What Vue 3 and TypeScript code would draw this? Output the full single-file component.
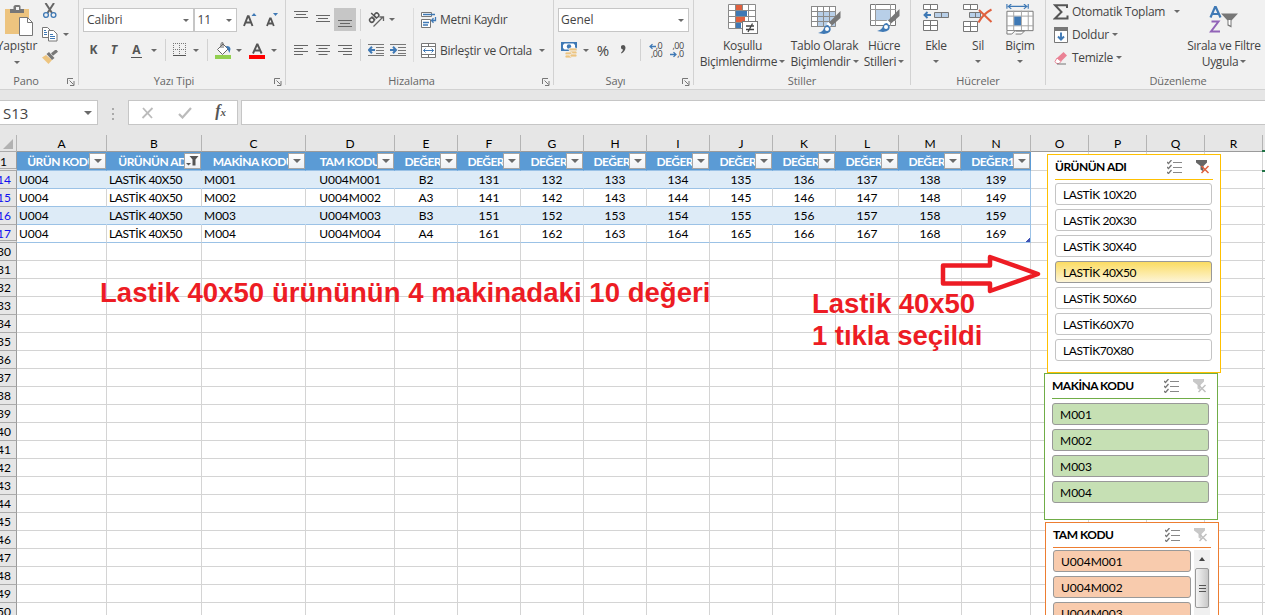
<script setup lang="ts">
interface Column {
  letter: string
  title?: string
  filtered?: boolean
  textual?: boolean
}
interface SheetRow {
  num: number
  cells?: string[]
  band?: boolean
}
interface Slicer {
  id: string
  title: string
  items: string[]
  selected?: string
  active?: boolean
  scroll?: boolean
}

const columns: Column[] = [
  { letter: 'A', title: 'ÜRÜN KODU', textual: true },
  { letter: 'B', title: 'ÜRÜNÜN ADI', filtered: true, textual: true },
  { letter: 'C', title: 'MAKİNA KODU', textual: true },
  { letter: 'D', title: 'TAM KODU' },
  ...['E', 'F', 'G', 'H', 'I', 'J', 'K', 'L', 'M', 'N'].map((letter, i) => ({
    letter,
    title: 'DEĞER' + (i + 1),
  })),
  ...['O', 'P', 'Q', 'R', ''].map((letter) => ({ letter })),
]

const seats = ['B2', 'A3', 'B3', 'A4']
const dataRows: SheetRow[] = seats.map((seat, i) => ({
  num: 14 + i,
  band: i % 2 === 0,
  cells: [
    'U004',
    'LASTİK 40X50',
    'M00' + (i + 1),
    'U004M00' + (i + 1),
    seat,
    ...Array.from({ length: 9 }, (_, k) => String(131 + i * 10 + k)),
  ],
}))
const emptyRows: SheetRow[] = Array.from({ length: 21 }, (_, i) => ({ num: 30 + i }))
const rows: SheetRow[] = [...dataRows, ...emptyRows]

const slicers: Slicer[] = [
  {
    id: 'gold',
    title: 'ÜRÜNÜN ADI',
    items: ['LASTİK 10X20', 'LASTİK 20X30', 'LASTİK 30X40', 'LASTİK 40X50', 'LASTİK 50X60', 'LASTİK60X70', 'LASTİK70X80'],
    selected: 'LASTİK 40X50',
    active: true,
  },
  { id: 'green', title: 'MAKİNA KODU', items: ['M001', 'M002', 'M003', 'M004'] },
  { id: 'orange', title: 'TAM KODU', items: ['U004M001', 'U004M002', 'U004M003', 'U004M004'], scroll: true },
]
</script>

<template>
  <div class="app">
    <header class="ribbon">
      <section class="group pano">
        <div class="body">
          <div class="paste">
            <svg width="30" height="32" viewBox="0 0 30 32">
              <rect x="0" y="4" width="24" height="25" fill="#edc47f" />
              <path d="M5 4h3.500V1.500Q9 0 10.500 0h3.500Q15.500 0 15.500 1.500V4H19v4H5z" fill="#777" />
              <rect x="11" y="2" width="3" height="3" fill="#f1f1f1" />
              <path d="M14.500 12.500h8l5 5v13h-13z" fill="#fff" stroke="#777" />
              <path d="M22.500 12.500v5h5" fill="none" stroke="#777" />
            </svg>
            <span class="tx">Yapıştır</span>
            <i class="caret"></i>
          </div>
          <div class="clip">
            <svg width="16" height="16" viewBox="0 0 16 16">
              <path d="M3.500 0l6.500 10M12 0L5.500 10" stroke="#666" stroke-width="2" fill="none" />
              <circle cx="4" cy="12" r="2.400" fill="none" stroke="#3f79b5" stroke-width="1.300" />
              <circle cx="11.500" cy="12" r="2.400" fill="none" stroke="#3f79b5" stroke-width="1.300" />
            </svg>
            <div class="copy">
              <svg width="16" height="15" viewBox="0 0 16 15">
                <path d="M.5.5h5l3 3v7h-8z" fill="#fff" stroke="#777" />
                <path d="M6.500 3.500h5l3.500 3.500v7H6.500z" fill="#fff" stroke="#777" />
                <path d="M2 3.500h2M2 5.500h3M2 7.500h3M8 7.500h3M8 9.500h5M8 11.500h5" stroke="#3f79b5" />
              </svg>
              <i class="caret"></i>
            </div>
            <svg width="17" height="14" viewBox="0 0 17 14">
              <path d="M0 7.500l4-2.500 6 5-3.500 4z" fill="#edc47f" />
              <path d="M4.500 4L7 2l5.500 6-2.500 2z" fill="#777" />
              <path d="M10 4.500L15 .5" stroke="#777" stroke-width="3.200" />
            </svg>
          </div>
        </div>
        <footer><span>Pano</span><svg class="launch" viewBox="0 0 8 8"><path d="M.5 6V.5H6M2.500 2.500l4 4M7 3v4.500H3" /></svg></footer>
      </section>

      <section class="group font">
        <div class="r1">
          <div class="box name"><span class="tx">Calibri</span><i class="caret"></i></div>
          <div class="box size"><span class="tx">11</span><i class="caret"></i></div>
          <svg width="16" height="16" viewBox="0 0 16 16">
            <path d="M1 14L4.800 4.300h.9L9.500 14M2.500 10.500h5.500" fill="none" stroke="#555" stroke-width="1.900" />
            <path d="M8.500 4L11 1l2.500 3z" fill="#3f79b5" />
          </svg>
          <svg width="14" height="16" viewBox="0 0 14 16">
            <path d="M1 14L4 6.300h.8L7.800 14M2.200 11.500h4.300" fill="none" stroke="#555" stroke-width="1.800" />
            <path d="M7 1h5L9.500 4z" fill="#3f79b5" />
          </svg>
        </div>
        <div class="r2">
          <b class="fmt">K</b>
          <b class="fmt it">T</b>
          <b class="fmt un">A</b>
          <i class="caret"></i>
          <i class="sep"></i>
          <svg width="14" height="14" viewBox="0 0 14 14" shape-rendering="crispEdges">
            <path d="M.5 0v12M6.500 0v12M12.500 0v12M0 .5h13M0 6.500h13" stroke="#777" stroke-dasharray="1 1" fill="none" />
            <path d="M0 12.500h13" stroke="#555" />
          </svg>
          <i class="caret"></i>
          <i class="sep"></i>
          <svg width="16" height="17" viewBox="0 0 16 17">
            <path d="M2.500 7.500L8 2l5 5-5.500 5.500z" fill="#fff" stroke="#666" />
            <path d="M6 6V1.500Q6.500.5 8 .8V6" fill="none" stroke="#666" />
            <path d="M11 4q4-.5 4.500 3L14.500 11 12 6z" fill="#3f79b5" />
            <rect y="13" width="16" height="4" fill="#92d050" />
          </svg>
          <i class="caret"></i>
          <svg width="16" height="17" viewBox="0 0 16 17">
            <path d="M4 11.500L8 2.500h.6l4 9M5.500 8.500h6" fill="none" stroke="#555" stroke-width="1.900" />
            <rect y="13" width="16" height="4" fill="#f00" />
          </svg>
          <i class="caret"></i>
        </div>
        <footer><span>Yazı Tipi</span><svg class="launch" viewBox="0 0 8 8"><path d="M.5 6V.5H6M2.500 2.500l4 4M7 3v4.500H3" /></svg></footer>
      </section>

      <section class="group align">
        <div class="alignbody">
          <div class="aleft">
            <div class="r1">
              <svg class="ln" viewBox="0 0 14 23"><path d="M0 3.500h14M2 6.500h10M0 9.500h14" /></svg>
              <svg class="ln" viewBox="0 0 14 23"><path d="M0 7.500h14M2 10.500h10M0 13.500h14" /></svg>
              <span class="pressed"><svg class="ln" viewBox="0 0 14 23"><path d="M0 12.500h14M2 15.500h10M0 18.500h14" /></svg></span>
              <i class="sep"></i>
              <svg width="17" height="17" viewBox="0 0 17 17">
                <g transform="rotate(-45 7 8)">
                  <circle cx="4" cy="6.500" r="2.200" fill="none" stroke="#555" stroke-width="1.500" />
                  <path d="M6.300 3.800v5.200M8.600 1v8" stroke="#555" stroke-width="1.500" />
                  <circle cx="10.800" cy="6.500" r="2.200" fill="none" stroke="#555" stroke-width="1.500" />
                </g>
                <path d="M5.500 15.500L15 6M11.500 6H15.500v4" fill="none" stroke="#666" stroke-width="1.300" />
              </svg>
              <i class="caret"></i>
            </div>
            <div class="r2">
              <svg class="ln" viewBox="0 0 14 23"><path d="M0 6.500h14M0 9.500h9M0 12.500h14M0 15.500h9" /></svg>
              <svg class="ln" viewBox="0 0 14 23"><path d="M0 6.500h14M2.500 9.500h9M0 12.500h14M2.500 15.500h9" /></svg>
              <svg class="ln" viewBox="0 0 14 23"><path d="M0 6.500h14M5 9.500h9M0 12.500h14M5 15.500h9" /></svg>
              <i class="sep"></i>
              <svg width="16" height="14" viewBox="0 0 16 14">
                <path d="M0 1.500h16M8 4.500h8M8 7.500h8M8 10.500h8M0 12.500h16" stroke="#777" />
                <path d="M7 7H2M4 3.800L1 7l3 3.200" stroke="#3f79b5" stroke-width="2" fill="none" />
              </svg>
              <svg width="16" height="14" viewBox="0 0 16 14">
                <path d="M0 1.500h16M8 4.500h8M8 7.500h8M8 10.500h8M0 12.500h16" stroke="#777" />
                <path d="M0 7h5M3 3.800L6 7l-3 3.200" stroke="#3f79b5" stroke-width="2" fill="none" />
              </svg>
            </div>
          </div>
          <div class="aright">
            <div class="cmd">
              <svg width="16" height="16" viewBox="0 0 16 16">
                <path d="M.5.500h10v4H.5zM.5 7.500h9v8h-9z" fill="#fff" stroke="#777" />
                <path d="M2 2.500h12M2 10.500h6M2 13h5M14.500 5v3.500H11M12.500 6.300L10.500 8.500l2 2.200" fill="none" stroke="#3f79b5" stroke-width="1.300" />
              </svg>
              <span class="tx">Metni Kaydır</span>
            </div>
            <div class="cmd">
              <svg width="16" height="16" viewBox="0 0 16 16">
                <path d="M.5.500h14v14H.5zM.5 3.500h14M.5 11.500h14M7.500.5v3M7.500 11.500v3" fill="#fff" stroke="#777" />
                <path d="M2.500 7.500h10M4.500 5.500l-2 2 2 2M10.500 5.500l2 2-2 2" fill="none" stroke="#3f79b5" />
              </svg>
              <span class="tx">Birleştir ve Ortala</span>
              <i class="caret"></i>
            </div>
          </div>
        </div>
        <footer><span>Hizalama</span><svg class="launch" viewBox="0 0 8 8"><path d="M.5 6V.5H6M2.500 2.500l4 4M7 3v4.500H3" /></svg></footer>
      </section>

      <section class="group number">
        <div class="r1"><div class="box"><span class="tx">Genel</span><i class="caret"></i></div></div>
        <div class="r2">
          <svg width="17" height="16" viewBox="0 0 17 16">
            <rect x="0" y="0" width="16" height="9" fill="#3f79b5" />
            <path d="M2 3L3.500 1.500h9L14 3v3L12.500 7.500h-9L2 6z" fill="#fff" />
            <circle cx="8" cy="4.500" r="2.200" fill="#3f79b5" />
            <g fill="#edc47f" stroke="#f1f1f1" stroke-width=".8">
              <rect x="8" y="6" width="8" height="3.200" rx="1.500" /><rect x="8" y="9" width="8" height="3.200" rx="1.500" />
              <rect x="4" y="10" width="7" height="3" rx="1.500" /><rect x="4" y="13" width="7" height="3" rx="1.500" /><rect x="9" y="12" width="7" height="3" rx="1.500" />
            </g>
          </svg>
          <i class="caret"></i>
          <span class="pct">%</span>
          <svg width="7" height="12" viewBox="0 0 7 12"><path d="M1 2.500Q1 1 3.200 1 5.500 1 5.500 3.500 5.500 7 1.500 9.500L1 8.700Q3 7 3 5.500 1 5.500 1 3.500z" fill="#555" /></svg>
          <i class="sep"></i>
          <div class="dec"><span><svg width="7" height="7" viewBox="0 0 8 7"><path d="M8 3.500H2M4 .8L1.200 3.500 4 6.200" fill="none" stroke="#3f79b5" stroke-width="1.500" /></svg>,0</span><span>,00</span></div>
          <div class="dec"><span>,00</span><span><svg width="7" height="7" viewBox="0 0 8 7"><path d="M0 3.500h6M4 .8L6.800 3.500 4 6.200" fill="none" stroke="#3f79b5" stroke-width="1.500" /></svg>,0</span></div>
        </div>
        <footer><span>Sayı</span><svg class="launch" viewBox="0 0 8 8"><path d="M.5 6V.5H6M2.500 2.500l4 4M7 3v4.500H3" /></svg></footer>
      </section>

      <section class="group styles">
        <div class="bigs">
          <div class="big">
            <svg width="30" height="31" viewBox="0 0 30 31">
              <path d="M.5.500h27v24H.5z" fill="#fff" stroke="#8a8a8a" />
              <path d="M0 6.500h28M0 12.500h28M0 18.500h28M7.500 0v25M14.500 0v25M20.500 0v25" stroke="#8a8a8a" />
              <path d="M8 1h6v5H8zM8 13h9v5H8z" fill="#e0603e" /><path d="M8 7h11v5H8zM8 19h5v5H8z" fill="#3f79b5" />
              <rect x="14.500" y="17.500" width="15" height="12" fill="#fff" stroke="#777" />
              <path d="M18 22h8M18 25.500h8M24.500 19.500l-4.500 8.500" stroke="#444" stroke-width="1.300" />
            </svg>
            <span class="tx">Koşullu</span>
            <span class="tx">Biçimlendirme<i class="caret"></i></span>
          </div>
          <div class="big">
            <svg width="30" height="31" viewBox="0 0 30 31">
              <path d="M.5 2.500h24v20H.5z" fill="#fff" stroke="#777" />
              <path d="M7 8h18v15H7z" fill="#b8cfe8" />
              <path d="M0 7.500h25M0 12.500h25M0 17.500h25M6.500 2v21M12.500 2v21M18.500 2v21M.5 2.500h24v20H.5z" fill="none" stroke="#8a8a8a" />
              <path d="M29.500 7v7l-9 8-3-3z" fill="#777" /><path d="M17.500 18l3 3-2 2-3-3z" fill="#fff" />
              <path d="M7 29q5-1 6-5 1-3 4-3l2.500 2.500Q21 29 13 30z" fill="#3f79b5" /><circle cx="16" cy="25" r="2" fill="#fff" />
            </svg>
            <span class="tx">Tablo Olarak</span>
            <span class="tx">Biçimlendir<i class="caret"></i></span>
          </div>
          <div class="big">
            <svg width="30" height="31" viewBox="0 0 30 31">
              <path d="M.5.500h25v21H.5z" fill="#fff" stroke="#777" />
              <path d="M0 5.500h26M0 16.500h26M5.500 0v22M20.500 0v22" stroke="#999" />
              <rect x="6" y="6" width="14" height="10" fill="#b8cfe8" />
              <path d="M29.500 5v7l-9 8-3-3z" fill="#777" /><path d="M17.500 16l3 3-2 2-3-3z" fill="#fff" />
              <path d="M7 27q5-1 6-5 1-3 4-3l2.500 2.500Q21 27 13 28z" fill="#3f79b5" /><circle cx="16" cy="23" r="2" fill="#fff" />
            </svg>
            <span class="tx">Hücre</span>
            <span class="tx">Stilleri<i class="caret"></i></span>
          </div>
        </div>
        <footer><span>Stiller</span></footer>
      </section>

      <section class="group cellsg">
        <div class="bigs">
          <div class="big">
            <svg width="26" height="31" viewBox="0 0 26 31">
              <path d="M.5.500h14v5H.5zM7.500.5v5M.5 16.500h14v10H.5zM.5 21.500h14M7.500 16.500v10" fill="#fff" stroke="#777" />
              <path d="M11.500 8.500h14v5h-14zM18.500 8.500v5" fill="#b8cfe8" stroke="#777" />
              <path d="M8 11H2M4.500 8L1.500 11l3 3" fill="none" stroke="#3f79b5" stroke-width="1.900" />
            </svg>
            <span class="tx">Ekle</span><i class="caret"></i>
          </div>
          <div class="big">
            <svg width="30" height="31" viewBox="0 0 30 31">
              <path d="M.5.500h14v5H.5zM7.500.5v5M.5 17.500h14v10H.5zM.5 22.500h14M7.500 17.500v10" fill="#fff" stroke="#777" />
              <path d="M6.500 8.500h11v5h-11zM12.500 8.500v5" fill="#b8cfe8" stroke="#777" />
              <path d="M16 6l12.500 12M28.500 5.500Q20 10 15.500 18.500" fill="none" stroke="#e0603e" stroke-width="2" />
            </svg>
            <span class="tx">Sil</span><i class="caret"></i>
          </div>
          <div class="big">
            <svg width="28" height="32" viewBox="0 0 28 32">
              <path d="M.5 0v5M22.500 0v5M2 2.500h19M5 0L2 2.500 5 5M18 0l3 2.500L18 5" fill="none" stroke="#3f79b5" stroke-width="1.200" />
              <path d="M.5 7.500h27v20H.5z" fill="#fff" stroke="#777" />
              <path d="M0 12.500h28M0 22.500h28M7.500 7v20M15.500 7v20M22.500 7v20" stroke="#a5a5a5" />
              <rect x="8" y="13" width="7" height="9" fill="#3f79b5" />
              <path d="M.5 28v3h5l3-3M9.500 31h6l3-3h-9" fill="#fff" stroke="#777" />
            </svg>
            <span class="tx">Biçim</span><i class="caret"></i>
          </div>
        </div>
        <footer><span>Hücreler</span></footer>
      </section>

      <section class="group edit">
        <div class="editbody">
          <div class="cmds">
            <div class="cmd">
              <svg width="16" height="16" viewBox="0 0 16 16"><path d="M14 4V1.200H2L8.500 8 2 14.500h12.500V11.500" fill="none" stroke="#555" stroke-width="2" /></svg>
              <span class="tx">Otomatik Toplam</span><i class="caret far"></i>
            </div>
            <div class="cmd">
              <svg width="16" height="16" viewBox="0 0 16 16">
                <path d="M1.500.5h13v15h-13z" fill="#fff" stroke="#777" /><path d="M1 0h14v4H1z" fill="#777" />
                <path d="M8 5.500v7M5 9.500l3 3.200 3-3.200" fill="none" stroke="#3f79b5" stroke-width="1.900" />
              </svg>
              <span class="tx">Doldur</span><i class="caret"></i>
            </div>
            <div class="cmd">
              <svg width="16" height="16" viewBox="0 0 16 16">
                <path d="M4 8l6.500-6 3.500 3.500-6 6z" fill="#ea8194" /><path d="M4 8l4 3.500-2 2H3.500L2 11.500z" fill="#fff" stroke="#ea8194" />
                <path d="M4 14h9" stroke="#777" />
              </svg>
              <span class="tx">Temizle</span><i class="caret"></i>
            </div>
          </div>
          <div class="big">
            <svg width="30" height="28" viewBox="0 0 30 28">
              <path d="M1.500 12L6 1.500h.8L11.500 12M3 8.500h7" fill="none" stroke="#3f79b5" stroke-width="2.200" />
              <path d="M2.500 16h7L2 26h9" fill="none" stroke="#9264b8" stroke-width="2" />
              <path d="M12 8h17l-6.500 7v7l-4-2v-5z" fill="#777" /><path d="M19.500 14.500h2v5.500l-2-1z" fill="#fff" />
            </svg>
            <span class="tx">Sırala ve Filtre</span>
            <span class="tx">Uygula<i class="caret"></i></span>
          </div>
        </div>
        <footer><span>Düzenleme</span></footer>
      </section>
    </header>

    <div class="formula">
      <div class="namebox"><span>S13</span><i class="caret"></i></div>
      <div class="dots"><i></i><i></i><i></i></div>
      <div class="fx">
        <svg width="14" height="12" viewBox="0 0 14 12"><path d="M2 1l9 10M11.500 1L1.500 11" stroke="#bbb" stroke-width="1.800" /></svg>
        <svg width="14" height="12" viewBox="0 0 14 12"><path d="M1 7l3.500 3.500L13 1" fill="none" stroke="#bbb" stroke-width="2.200" /></svg>
        <span class="fxl"><i>f</i><i class="sub">x</i></span>
      </div>
      <div class="input"></div>
    </div>

    <main class="sheet">
      <div class="row letters">
        <div class="rh corner"><svg width="10" height="10" viewBox="0 0 10 10"><path d="M10 0v10H0z" fill="#b2b2b2" /></svg></div>
        <div v-for="(c, i) in columns" :key="i" class="cell">{{ c.letter }}</div>
      </div>
      <div class="row titles">
        <div class="rh gap first">1</div>
        <div v-for="(c, i) in columns" :key="i" class="cell" :class="{ head: c.title }">
          <template v-if="c.title">
            <span>{{ c.title }}</span>
            <div class="filter">
              <i v-if="!c.filtered" class="caret"></i>
              <svg v-else width="13" height="12" viewBox="0 0 13 12"><path d="M3.500 1H12.500L9.500 4.500V10.500h-3V4.500z" fill="#555" /><path d="M0 8h5L2.500 10.500z" fill="#555" /></svg>
            </div>
          </template>
        </div>
      </div>
      <div
        v-for="r in rows"
        :key="r.num"
        class="row"
        :class="{ band: r.band, data: r.cells }"
      >
        <div class="rh" :class="{ blue: r.cells, gap: r.num === 17 }">{{ r.num }}</div>
        <div v-for="(c, i) in columns" :key="i" class="cell" :class="{ textual: c.textual, tbl: r.cells && c.title }">
          {{ r.cells?.[i] ?? '' }}
        </div>
      </div>
    </main>

    <i class="handle"></i>
    <i class="sel"></i>

    <p class="note one">Lastik 40x50 ürününün 4 makinadaki 10 değeri</p>
    <p class="note two">Lastik 40x50<br />1 tıkla seçildi</p>
    <svg class="arrow" width="102" height="42" viewBox="0 0 102 42">
      <path d="M3 12.500h47V4L98 21 50 38V30.500H3z" fill="none" stroke="#ed1c24" stroke-width="4.500" stroke-linejoin="round" />
    </svg>

    <aside v-for="s in slicers" :key="s.id" class="slicer" :class="s.id">
      <div class="shead">
        <b>{{ s.title }}</b>
        <svg width="16" height="14" viewBox="0 0 16 14">
          <path d="M6 2.500h9M6 7.500h9M6 12.500h9" stroke="#888" />
          <path d="M0 2l1.500 1.500L4.500 0M0 7l1.500 1.500L4.500 5M0 12l1.500 1.500L4.500 10" fill="none" stroke="#777" stroke-width="1.300" />
        </svg>
        <svg width="15" height="14" viewBox="0 0 15 14" class="clear" :class="{ on: s.active }">
          <path class="fun" d="M1 0h11v2.500L8.500 6v5.500l-3-2V6L1 2.500z" />
          <path class="x" d="M6.500 6l7 7M13.500 6l-7 7" />
        </svg>
      </div>
      <div class="sbody">
        <div class="items">
          <div v-for="t in s.items" :key="t" class="item" :class="{ picked: s.selected === t }">{{ t }}</div>
        </div>
        <div v-if="s.scroll" class="scroll">
          <i class="up"></i>
          <div class="thumb"><i></i><i></i><i></i></div>
        </div>
      </div>
    </aside>
  </div>
</template>

<style>
body {
  overflow: hidden;
}
</style>

<style scoped>
* {
  box-sizing: border-box;
}
.app {
  position: relative;
  width: 1265px;
  height: 615px;
  overflow: hidden;
  background: #fff;
  color: #444;
  font: 12px/16px 'Open Sans', sans-serif;
}
svg {
  display: block;
  flex: none;
}
.tx {
  white-space: nowrap;
  letter-spacing: -0.28px;
}
.caret {
  flex: none;
  display: inline-block;
  width: 0;
  height: 0;
  border: 3px solid transparent;
  border-top-color: #6a6a6a;
  border-bottom: 0;
}
.ribbon {
  display: flex;
  height: 90px;
  overflow: hidden;
  background: #f1f1f1;
  border-bottom: 1px solid #d2d2d2;
}
.group {
  position: relative;
  flex: none;
  display: flex;
  flex-direction: column;
  height: 85px;
  padding-top: 8px;
  border-right: 1px solid #d2d2d2;
}
.pano { width: 79px; }
.font { width: 207px; }
.align { width: 268px; }
.number { width: 140px; }
.styles { width: 217px; }
.cellsg { width: 135px; }
.edit { width: 265px; }
footer {
  display: flex;
  align-items: center;
  justify-content: center;
  height: 14px;
  margin-top: auto;
  margin-bottom: -3px;
  padding-right: 16px;
  color: #666;
  font-size: 11px;
}
footer span { letter-spacing: -0.1px; }
.pano footer { padding-right: 26px; }
.styles footer, .cellsg footer, .edit footer { padding-right: 0; }
.launch {
  position: absolute;
  right: 3px;
  bottom: -1px;
  width: 8px;
  height: 8px;
  fill: none;
  stroke: #777;
}
.r1, .r2 {
  display: grid;
  place-items: center;
  height: 23px;
}
.r2 { margin-top: 7px; height: 24px; }
.sep { width: 1px; height: 22px; background: #d2d2d2; }
.box {
  display: flex;
  align-items: center;
  justify-content: space-between;
  width: 100%;
  height: 24px;
  padding: 0 4px 0 3px;
  border: 1px solid #c6c6c6;
  background: #fff;
}
.box .tx { letter-spacing: 0; }
.pano .body { display: flex; margin-top: -3px; }
.paste { display: flex; flex-direction: column; align-items: center; width: 34px; }
.paste svg { margin-left: 5px; }
.paste .tx { margin-top: 1px; letter-spacing: -0.15px; }
.paste .caret { margin-top: 7px; }
.clip { display: flex; flex-direction: column; margin: -2px 0 0 8px; }
.copy { display: flex; align-items: center; gap: 5px; margin: 8px 0 8px; }
.font .r1 { grid-template-columns: 111px 43px 28px 15px; padding-left: 4px; }
.font .size { margin-left: -1px; }
.font .r2 { grid-template-columns: 19px 22px 23px 11px 12px 18px 14px 8px 24px 8px 28px 6px; justify-content: start; padding-left: 5px; }
.fmt { font-size: 12px; line-height: 14px; color: #555; }
.it { font-style: italic; }
.un { border-bottom: 1px solid #555; padding: 0 1px; }
.alignbody { display: flex; height: 54px; }
.aleft { width: 128px; border-right: 1px solid #dcdcdc; }
.align .r2 { grid-template-columns: 22px 22px 22px 8px 24px 20px; padding-left: 4px; }
.align .r1 { grid-template-columns: 22px 22px 22px 8px 25px 6px; padding-left: 4px; }
.ln { width: 14px; height: 23px; stroke: #666; fill: none; }
.pressed { display: grid; place-items: center; width: 22px; height: 23px; background: #c6c6c6; }
.aright { padding-left: 7px; }
.cmd { display: flex; align-items: center; gap: 3px; height: 23px; }
.aright .cmd + .cmd { margin-top: 8px; }
.aright .caret { margin-left: 4px; }
.number .r1 { padding: 0 4px 0 4px; }
.number .box { padding-left: 2px; }
.number .r2 { grid-template-columns: 19px 13px 22px 19px 15px 15px 28px; justify-content: start; padding-left: 6px; }
.pct { font-size: 15px; }
.dec {
  display: flex;
  flex-direction: column;
  align-items: flex-end;
  font-size: 9px;
  line-height: 8px;
  letter-spacing: -0.4px;
}
.dec span { display: flex; align-items: center; }
.bigs { display: flex; margin-top: -4px; }
.big { display: flex; flex-direction: column; align-items: center; }
.big svg { height: 31px; margin-bottom: 3px; }
.big .caret { margin-left: 2px; vertical-align: 3px; }
.cellsg .caret { margin-top: 6px; margin-left: 0; }
.styles .bigs { padding-left: 5px; }
.styles .big:nth-child(1) { width: 87px; }
.styles .big:nth-child(2) { width: 77px; }
.styles .big:nth-child(3) { width: 42px; }
.styles .big:nth-child(n + 2) svg { margin-left: 2px; }
.cellsg .big { width: 42px; }
.cellsg .bigs { padding-left: 4px; }
.editbody { display: flex; margin-top: -8px; }
.cmds { width: 141px; padding-left: 7px; }
.edit .far { margin-left: 6px; }
.edit .big { margin-top: 4px; width: 74px; }

.formula { display: flex; height: 45px; padding-top: 10px; background: #e6e6e6; }
.namebox, .fx, .input { height: 25px; border: 1px solid #c6c6c6; background: #fff; }
.namebox {
  display: flex;
  align-items: center;
  justify-content: space-between;
  width: 98px;
  padding: 0 5px 0 3px;
  border-left: 0;
  font-size: 15px;
}
.namebox .caret { border-width: 4px 4px 0; }
.dots { display: flex; flex-direction: column; gap: 3px; width: 30px; padding: 8px 0 0 14px; }
.dots i { width: 2px; height: 2px; background: #aaa; }
.fx { display: flex; align-items: center; justify-content: space-between; width: 110px; padding: 0 11px 0 12px; }
.fxl { margin-top: -2px; font: italic bold 16px/16px 'Liberation Serif', serif; color: #555; }
.sub { font-size: 11px; }
.input { flex: 1; margin-left: 3px; border-right: 0; }

.row {
  display: grid;
  grid-template-columns: 17px 90px 95px 104px 89px repeat(9, 63px) 69px repeat(4, 58px) 60px;
  height: 18px;
  color: #000;
  font: 12px/18px Lato, sans-serif;
}
.cell {
  position: relative;
  overflow: hidden;
  border-right: 1px solid #d4d4d4;
  border-bottom: 1px solid #d4d4d4;
  text-align: center;
  white-space: nowrap;
}
.textual.tbl { text-align: left; padding-left: 2px; }
.tbl:nth-child(3) { letter-spacing: -0.4px; }
.rh {
  display: flex;
  justify-content: flex-end;
  padding-right: 5px;
  background: #e6e6e6;
  border-right: 1px solid #9b9b9b;
  border-bottom: 1px solid #ababab;
  overflow: hidden;
}
.rh.blue { color: #1010f0; }
.rh.gap { border-bottom: 3px double #ababab; }
.rh.first { padding-right: 9px; }
.letters { height: 17px; line-height: 18px; background: #e6e6e6; }
.letters .cell { border-right-color: #b4b4b4; border-bottom-color: #9b9b9b; }
.corner { padding: 4px 3px 0 0; border-right-color: #b4b4b4; }
.titles { height: 19px; line-height: 19px; }
.titles .cell.head {
  background: #5b9bd5;
  border-right-color: #5b9bd5;
  border-bottom-color: #9bc2e6;
  color: #fff;
  font-weight: 700;
  letter-spacing: -0.5px;
}
.head span { display: block; margin: 0 -10px; }
.filter {
  position: absolute;
  right: 0;
  top: 1px;
  display: grid;
  place-items: center;
  width: 17px;
  height: 16px;
  border: 1px solid #a5a5a5;
  background: linear-gradient(#fff, #eef0f4);
}
.filter .caret { border-width: 4px 4px 0; }
.data .tbl { border-bottom-color: #9bc2e6; }
.band .tbl { background: #ddebf7; border-right-color: #ddebf7; }
.data .tbl:nth-child(15) { border-right-color: #9bc2e6; }

.handle {
  position: absolute;
  left: 1026px;
  top: 238px;
  width: 4px;
  height: 4px;
  background: linear-gradient(135deg, transparent 45%, #3f51b5 45%);
}
.sel {
  position: absolute;
  left: 1262px;
  top: 150px;
  width: 4px;
  height: 22px;
  border: solid #217346;
  border-width: 2px 0;
}
.note {
  position: absolute;
  margin: 0;
  color: #ed1c24;
  font: bold 27.500px/32px 'Liberation Sans', sans-serif;
  white-space: nowrap;
}
.one { left: 100px; top: 277px; letter-spacing: 0.05px; }
.two { left: 812px; top: 288px; letter-spacing: -0.05px; }
.arrow { position: absolute; left: 940px; top: 253px; }

.slicer {
  position: absolute;
  width: 174px;
  padding: 0 7px;
  border: 1px solid;
  background: #fff;
  color: #000;
  font: 12px/20px Lato, sans-serif;
}
.gold { left: 1047px; top: 154px; height: 219px; border-color: #ffc000; }
.green { left: 1044px; top: 373px; height: 147px; border-color: #70ad47; }
.orange { left: 1045px; top: 522px; height: 160px; border-color: #ed7d31; }
.shead {
  display: flex;
  align-items: center;
  height: 25px;
  border-bottom: 1px solid;
  border-color: inherit;
}
.shead b { flex: 1; letter-spacing: -0.5px; }
.clear { margin: 0 3px 0 12px; fill: #c8c8c8; stroke: none; }
.clear .x { stroke: #c0c0c0; stroke-width: 1.500; }
.clear.on .fun { fill: #666; }
.clear.on .x { stroke: #e0603e; }
.sbody { display: flex; padding-top: 3px; }
.green .sbody { padding-top: 4px; }
.items { flex: none; display: flex; flex-direction: column; gap: 4px; width: 157px; }
.item {
  height: 22px;
  padding-left: 7px;
  border: 1px solid #c4c4c4;
  border-radius: 3px;
  line-height: 22px;
}
.gold .item { letter-spacing: -0.4px; }
.picked { border-color: #999; background: linear-gradient(#fbdc62, #fdf5d8); }
.green .item { border-color: #999; background: #c6e0b4; }
.orange .item { border-color: #999; background: #f8cbad; }
.orange .items { width: 138px; }
.orange .sbody { padding-top: 2px; }
.scroll { width: 16px; height: 120px; margin-left: 3px; background: #f0f0f0; }
.up { display: block; width: 0; margin: 7px auto 0; border: 3px solid transparent; border-bottom: 4px solid #444; border-top: 0; }
.thumb {
  display: flex;
  flex-direction: column;
  align-items: center;
  justify-content: center;
  gap: 2px;
  height: 40px;
  margin: 7px 1px 0;
  border: 1px solid #999;
  border-radius: 2px;
  background: linear-gradient(90deg, #f4f4f4, #c8c8c8);
}
.thumb i { width: 7px; height: 1px; background: #555; }
</style>
